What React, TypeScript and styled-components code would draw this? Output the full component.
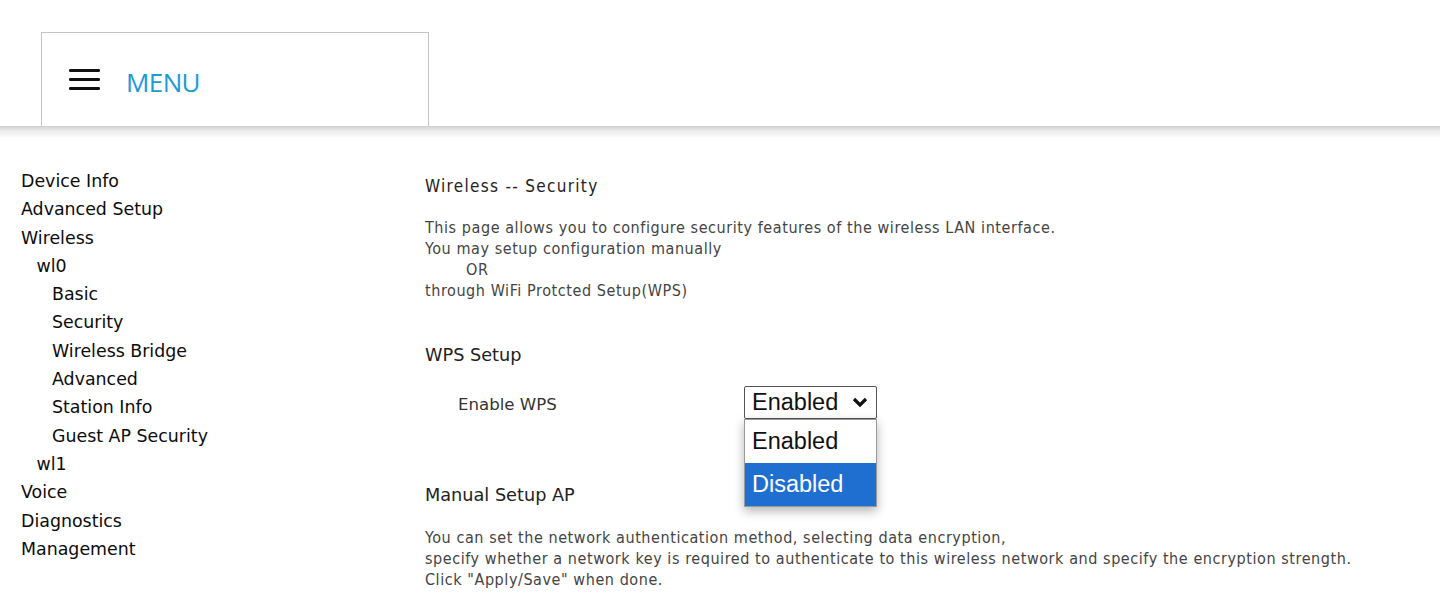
import React from "react";
import styled, { createGlobalStyle } from "styled-components";

const Global = createGlobalStyle`
  html, body {
    margin: 0;
    padding: 0;
    background: #ffffff;
  }
  body {
    font-family: "DejaVu Sans", Verdana, sans-serif;
  }
`;

const Header = styled.header`
  height: 126px;
  padding: 32px 0 0 41px;
  box-sizing: border-box;
  background: #ffffff;
`;

const MenuBox = styled.div`
  width: 388px;
  height: 94px;
  box-sizing: border-box;
  border: 1px solid #c4c4c4;
  border-bottom: none;
  background: #fff;
  display: flex;
  align-items: center;
  padding: 0 0 0 27px;
  gap: 26px;
`;

const MenuLabel = styled.span`
  font-family: "Open Sans", "Noto Sans", sans-serif;
  font-size: 26px;
  font-weight: 500;
  color: #1a9bd6;
  letter-spacing: -0.6px;
  margin-top: 4px;
`;

const ShadowBand = styled.div`
  height: 10px;
  background: linear-gradient(#d6d6d6, #ececec 40%, #fafafa 100%);
  border-top: 1px solid #cfcfcf;
`;

const Body = styled.div`
  display: flex;
  padding-top: 30px;
`;

const Sidebar = styled.nav`
  width: 425px;
  flex: none;
  padding-left: 21px;
  box-sizing: border-box;
  display: flex;
  flex-direction: column;
`;

const NavItem = styled.div<{ $level: number }>`
  font-family: "DejaVu Sans", Verdana, sans-serif;
  font-size: 17.4px;
  line-height: 28.3px;
  color: #0c0c0c;
  padding-left: ${(p) => p.$level * 15.5}px;
  white-space: nowrap;
`;

const Main = styled.main`
  flex: 1;
  display: flex;
  flex-direction: column;
  color: #3c3c3c;
  padding-top: 5px;
`;

const Title = styled.div`
  font-family: "DejaVu Sans Condensed", "DejaVu Sans", sans-serif;
  font-size: 17px;
  letter-spacing: 1.3px;
  line-height: 28px;
  color: #222;
  margin-bottom: 17px;
`;

const Para = styled.div`
  font-family: "DejaVu Sans Condensed", "DejaVu Sans", sans-serif;
  font-size: 16px;
  letter-spacing: 0.57px;
  line-height: 21px;
  color: #444;
  white-space: pre;
`;

const SectionHead = styled.div`
  font-family: "DejaVu Sans", Verdana, sans-serif;
  font-size: 17.7px;
  line-height: 28px;
  color: #222;
`;

const Row = styled.div`
  display: flex;
  align-items: center;
  padding-left: 33px;
  height: 34px;
`;

const RowLabel = styled.div`
  width: 286px;
  padding-top: 4px;
  font-family: "DejaVu Sans", Verdana, sans-serif;
  font-size: 16.6px;
  color: #333;
`;

const SelectWrap = styled.div`
  position: relative;
  width: 133px;
`;

const SelectBox = styled.div`
  height: 33px;
  box-sizing: border-box;
  border: 1px solid #555;
  border-radius: 2px;
  display: flex;
  align-items: center;
  justify-content: space-between;
  padding: 0 8px 0 7px;
  font-family: "Liberation Sans", Arial, sans-serif;
  font-size: 23.5px;
  color: #111;
  background: #fff;
`;

const OptionList = styled.div`
  position: absolute;
  top: 33px;
  left: 0;
  width: 133px;
  box-sizing: border-box;
  border: 1px solid #9a9a9a;
  background: #fff;
  box-shadow: 0 4px 10px rgba(0, 0, 0, 0.3);
  z-index: 5;
`;

const Option = styled.div<{ $active?: boolean }>`
  height: 43px;
  display: flex;
  align-items: center;
  padding-left: 7px;
  font-family: "Liberation Sans", Arial, sans-serif;
  font-size: 23.5px;
  color: ${(p) => (p.$active ? "#fff" : "#111")};
  background: ${(p) => (p.$active ? "#1f6fd1" : "#fff")};
`;

const Spacer = styled.div<{ $h: number }>`
  height: ${(p) => p.$h}px;
  flex: none;
`;

const Hamburger = () => (
  <svg width="31" height="22" viewBox="0 0 31 22">
    <rect x="0" y="0" width="31" height="3" rx="1.2" fill="#111" />
    <rect x="0" y="9" width="31" height="3" rx="1.2" fill="#111" />
    <rect x="0" y="18" width="31" height="3" rx="1.2" fill="#111" />
  </svg>
);

const Chevron = () => (
  <svg width="16" height="12" viewBox="0 0 16 12">
    <path d="M2 3 L8 9 L14 3" fill="none" stroke="#111" strokeWidth="3.2" />
  </svg>
);

const nav: [string, number][] = [
  ["Device Info", 0],
  ["Advanced Setup", 0],
  ["Wireless", 0],
  ["wl0", 1],
  ["Basic", 2],
  ["Security", 2],
  ["Wireless Bridge", 2],
  ["Advanced", 2],
  ["Station Info", 2],
  ["Guest AP Security", 2],
  ["wl1", 1],
  ["Voice", 0],
  ["Diagnostics", 0],
  ["Management", 0],
];

export default function App() {
  return (
    <>
      <Global />
      <Header>
        <MenuBox>
          <Hamburger />
          <MenuLabel>MENU</MenuLabel>
        </MenuBox>
      </Header>
      <ShadowBand />
      <Body>
        <Sidebar>
          {nav.map(([label, level]) => (
            <NavItem key={label} $level={level}>
              {label}
            </NavItem>
          ))}
        </Sidebar>
        <Main>
          <Title>Wireless -- Security</Title>
          <Para>
            {"This page allows you to configure security features of the wireless LAN interface.\nYou may setup configuration manually\n        OR\nthrough WiFi Protcted Setup(WPS)"}
          </Para>
          <Spacer $h={40} />
          <SectionHead>WPS Setup</SectionHead>
          <Spacer $h={16} />
          <Row>
            <RowLabel>Enable WPS</RowLabel>
            <SelectWrap>
              <SelectBox>
                <span>Enabled</span>
                <Chevron />
              </SelectBox>
              <OptionList>
                <Option>Enabled</Option>
                <Option $active>Disabled</Option>
              </OptionList>
            </SelectWrap>
          </Row>
          <Spacer $h={62} />
          <SectionHead>Manual Setup AP</SectionHead>
          <Spacer $h={18} />
          <Para>
            {"You can set the network authentication method, selecting data encryption,\nspecify whether a network key is required to authenticate to this wireless network and specify the encryption strength.\nClick \"Apply/Save\" when done."}
          </Para>
        </Main>
      </Body>
    </>
  );
}
